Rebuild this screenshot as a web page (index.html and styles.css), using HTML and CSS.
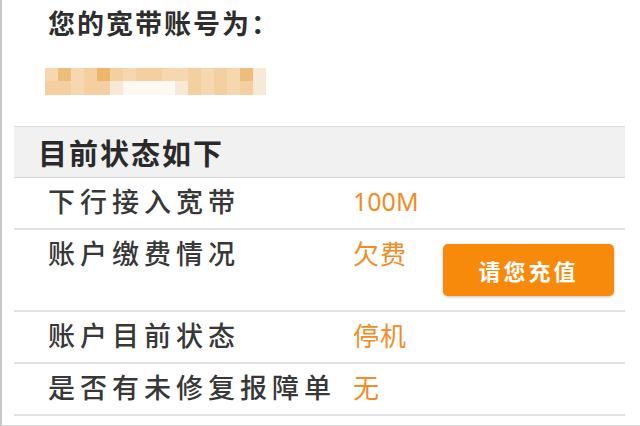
FILE: index.html
```html
<!DOCTYPE html>
<html lang="zh-CN">
<head>
    <meta charset="UTF-8">
    <meta name="viewport" content="width=device-width, initial-scale=1.0">
    <title>宽带账号状态</title>
    <link rel="stylesheet" href="styles.css">
</head>
<body>
    <div class="page">
        <h2 class="title">您的宽带账号为：</h2>

        <div class="account">
            <span class="t1"></span><span class="t3"></span><span class="t1"></span><span class="t2"></span><span class="t4"></span><span class="t2"></span><span class="t1"></span><span class="t2"></span><span class="t2"></span><span class="t1"></span><span class="t1"></span><span class="t2"></span><span class="t1"></span><span class="t2"></span><span class="t1"></span><span class="t3"></span><span class="t5"></span>
            <span class="t2"></span><span class="t2"></span><span class="t1"></span><span class="t2"></span><span class="t2"></span><span class="t5"></span><span class="t6"></span><span class="t6"></span><span class="t6"></span><span class="t6"></span><span class="t5"></span><span class="t2"></span><span class="t1"></span><span class="t2"></span><span class="t1"></span><span class="t2"></span><span class="t5"></span>
        </div>

        <div class="status">
            <div class="status-head">目前状态如下</div>
            <div class="row">
                <span class="label">下行接入宽带</span>
                <span class="value num">100M</span>
            </div>
            <div class="row">
                <span class="label">账户缴费情况</span>
                <span class="value">欠费</span>
                <button class="pay">请您充值</button>
            </div>
            <div class="row">
                <span class="label">账户目前状态</span>
                <span class="value">停机</span>
            </div>
            <div class="row">
                <span class="label">是否有未修复报障单</span>
                <span class="value">无</span>
            </div>
        </div>
    </div>
</body>
</html>
```

FILE: styles.css
```css
html, body{
    margin: 0;
    padding: 0;
    background-color: #fff;
}
body{
    font-family: "Noto Sans CJK SC", "Noto Sans", sans-serif;
    color: #333;
}
.page{
    height: 426px;
    box-sizing: border-box;
    border-left: 2px solid #c8c8c8;
    border-bottom: 1px solid #d8d8d8;
    overflow: hidden;
}
.title{
    margin: 0;
    padding: 5px 0 0 46px;
    font-size: 27px;
    line-height: 36px;
    letter-spacing: 2px;
    font-weight: bold;
    color: #2e2e2e;
}
.account{
    display: grid;
    grid-template-columns: repeat(17, 13px);
    grid-template-rows: 13px 14px;
    margin: 27px 0 0 43px;
    width: 222px;
}
.account span{ display: block; }
.t1{ background-color: #f6d8b0; }
.t2{ background-color: #f4cf9f; }
.t3{ background-color: #efbd7a; }
.t4{ background-color: #eeb56b; }
.t5{ background-color: #f8e9d6; }
.t6{ background-color: #fdf8f2; }

.status{
    margin: 31px 0 0 12px;
    width: 611px;
}
.status-head{
    background-color: #f1f1f1;
    border-top: 1px solid #dedede;
    border-bottom: 1px solid #d6d6d6;
    height: 50px;
    line-height: 50px;
    padding-left: 24px;
    font-size: 29px;
    font-weight: bold;
    letter-spacing: 2px;
    color: #2a2a2a;
}
.row{
    display: flex;
    align-items: flex-start;
    padding: 10px 0 14px 34px;
    border-bottom: 2px solid #e2e2e2;
}
.label{
    width: 305px;
    font-size: 27px;
    line-height: 26px;
    letter-spacing: 5px;
    font-weight: 500;
    white-space: nowrap;
    color: #383838;
}
.value{
    width: 90px;
    font-size: 26px;
    line-height: 26px;
    letter-spacing: 1px;
    color: #f08d26;
}
.value.num{
    font-family: "Noto Sans", sans-serif;
    font-size: 25px;
    letter-spacing: 0;
}
.pay{
    width: 171px;
    height: 52px;
    margin-top: 4px;
    border: none;
    border-radius: 5px;
    background-color: #f7890b;
    box-shadow: 0 1px 3px rgba(0, 0, 0, 0.25);
    color: #fff;
    font-family: "Noto Sans CJK SC", sans-serif;
    font-size: 22px;
    font-weight: bold;
    letter-spacing: 3px;
    cursor: pointer;
}
```
